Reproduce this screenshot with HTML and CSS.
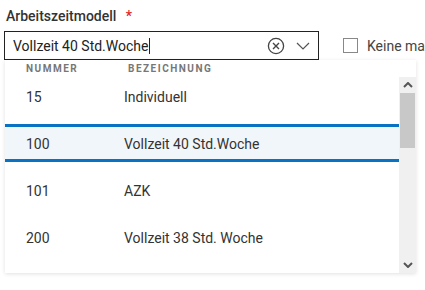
FILE: index.html
```html
<!DOCTYPE html>
<html lang="de">
<head>
  <meta charset="UTF-8" />
  <title>Arbeitszeitmodell</title>
  <link rel="stylesheet" href="styles.css">
</head>
<body>

  <div class="field">
    <div class="label">Arbeitszeitmodell <span class="req">*</span></div>

    <div class="line">
      <div class="combo">
        <span class="value">Vollzeit 40 Std.Woche</span><span class="caret"></span>
        <svg class="clear" width="18" height="18" viewBox="0 0 18 18">
          <circle cx="9" cy="9" r="7.6" fill="none" stroke="#444" stroke-width="1.3"/>
          <path d="M6 6 L12 12 M12 6 L6 12" stroke="#444" stroke-width="1.4" fill="none"/>
        </svg>
        <svg class="chev" width="14" height="8" viewBox="0 0 14 8">
          <path d="M1 1 L7 7 L13 1" stroke="#555" stroke-width="1.2" fill="none"/>
        </svg>
      </div>

      <label class="check"><span class="box"></span>Keine manuelle Eingabe</label>
    </div>

    <div class="dropdown">
      <div class="head">
        <span class="col-nr">NUMMER</span>
        <span class="col-name">BEZEICHNUNG</span>
      </div>
      <div class="list-wrap">
        <div class="list">
          <div class="item"><span class="nr">15</span><span class="name">Individuell</span></div>
          <div class="item selected"><span class="nr">100</span><span class="name">Vollzeit 40 Std.Woche</span></div>
          <div class="item"><span class="nr">101</span><span class="name">AZK</span></div>
          <div class="item"><span class="nr">200</span><span class="name">Vollzeit 38 Std. Woche</span></div>
        </div>
        <div class="scrollbar">
          <svg class="arrow" width="10" height="6" viewBox="0 0 10 6"><path d="M1 5 L5 1 L9 5" stroke="#555" stroke-width="2" fill="none"/></svg>
          <div class="thumb"></div>
          <div class="track"></div>
          <svg class="arrow" width="10" height="6" viewBox="0 0 10 6"><path d="M1 1 L5 5 L9 1" stroke="#555" stroke-width="2" fill="none"/></svg>
        </div>
      </div>
    </div>
  </div>

</body>
</html>
```

FILE: styles.css
```css
body {
  margin: 0;
  font-family: Roboto, 'Noto Sans', sans-serif;
  background: #fff;
  color: #333;
}
.field {
  position: relative;
  width: 425px;
  height: 290px;
  padding: 8px 0 0 4px;
  box-sizing: border-box;
  overflow: hidden;
}
.label {
  font-size: 14px;
  font-weight: 500;
  color: #333;
  padding-left: 2px;
  height: 23px;
}
.req {
  color: #e0242b;
  margin-left: 6px;
}
.line {
  display: flex;
  align-items: center;
  gap: 24px;
}
.combo {
  flex-shrink: 0;
  width: 315px;
  height: 29px;
  box-sizing: border-box;
  border: 1px solid #222;
  display: flex;
  align-items: center;
  padding: 0 8px 0 8px;
  font-size: 14px;
  color: #222;
}
.caret {
  width: 1px;
  height: 16px;
  background: #222;
  margin-left: 1px;
}
.clear {
  margin-left: auto;
  margin-right: 11px;
}
.check {
  flex-shrink: 0;
  display: flex;
  align-items: center;
  font-size: 14px;
  color: #444;
  white-space: nowrap;
}
.box {
  width: 13px;
  height: 13px;
  border: 1px solid #888;
  margin-right: 9px;
}
.dropdown {
  position: absolute;
  left: 5px;
  top: 60px;
  width: 411px;
  height: 213px;
  background: #fff;
  box-shadow: 0 1px 4px rgba(0, 0, 0, 0.12);
  display: flex;
  flex-direction: column;
}
.head {
  height: 17px;
  flex-shrink: 0;
  display: flex;
  align-items: center;
  font-size: 10px;
  font-weight: 700;
  letter-spacing: 1.5px;
  color: #777;
}
.col-nr {
  width: 123px;
  padding-left: 21px;
  box-sizing: border-box;
}
.list-wrap {
  flex: 1;
  display: flex;
  overflow: hidden;
}
.list {
  flex: 1;
  display: flex;
  flex-direction: column;
  margin-top: -4px;
}
.item {
  flex-shrink: 0;
  height: 38px;
  margin: 4px 0 5px;
  box-sizing: border-box;
  border-top: 3px solid transparent;
  border-bottom: 3px solid transparent;
  display: flex;
  align-items: center;
  padding-top: 2px;
  font-size: 14px;
  color: #333;
}
.item.selected {
  border-color: #0a72c2;
  background: #f1f6fb;
}
.nr {
  width: 119px;
  padding-left: 21px;
  box-sizing: border-box;
}
.scrollbar {
  width: 17px;
  background: #f0f0f0;
  display: flex;
  flex-direction: column;
  align-items: center;
}
.arrow {
  margin: 5px 0;
  flex-shrink: 0;
}
.thumb {
  width: 15px;
  height: 55px;
  flex-shrink: 0;
  background: #c8c8c8;
}
.track {
  flex: 1;
}
```
